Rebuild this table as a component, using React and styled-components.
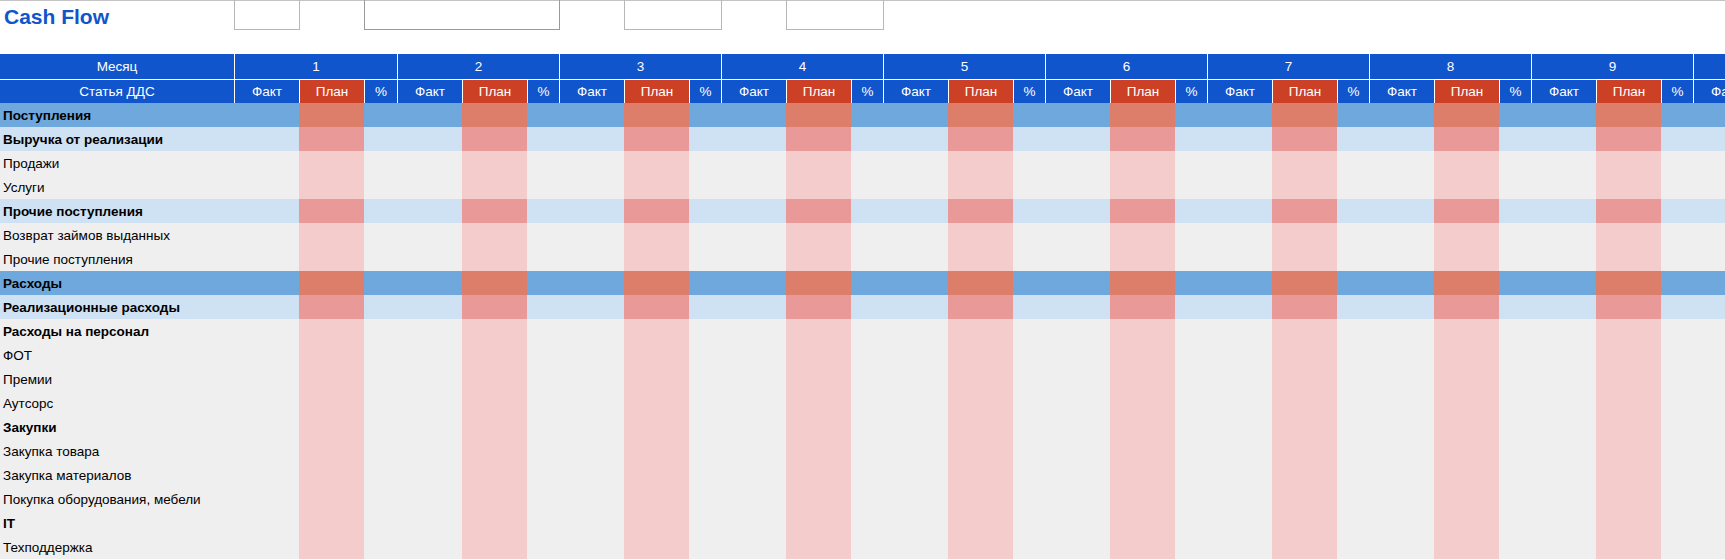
import React from 'react';
import styled, { createGlobalStyle } from 'styled-components';

const COLUMNS = '234px 65px 65px 33px repeat(9, 65px 65px 32px)';
const MONTHS = [1, 2, 3, 4, 5, 6, 7, 8, 9, 10];

const ROWS = [
  { name: 'Поступления', level: 1 },
  { name: 'Выручка от реализации', level: 2 },
  { name: 'Продажи' },
  { name: 'Услуги' },
  { name: 'Прочие поступления', level: 2 },
  { name: 'Возврат займов выданных' },
  { name: 'Прочие поступления' },
  { name: 'Расходы', level: 1 },
  { name: 'Реализационные расходы', level: 2 },
  { name: 'Расходы на персонал', bold: true },
  { name: 'ФОТ' },
  { name: 'Премии' },
  { name: 'Аутсорс' },
  { name: 'Закупки', bold: true },
  { name: 'Закупка товара' },
  { name: 'Закупка материалов' },
  { name: 'Покупка оборудования, мебели' },
  { name: 'IT', bold: true },
  { name: 'Техподдержка' },
];

const ROW_BG = { 0: '#efefef', 1: '#6fa8dc', 2: '#cfe2f3' };
const PLAN_BG = { 0: '#f4cccc', 1: '#dd7e6b', 2: '#ea9999' };

const GlobalStyle = createGlobalStyle`
  body {
    margin: 0;
    background: #fff;
    overflow: hidden;
    font-family: "Liberation Sans", Arial, sans-serif;
  }
`;

const Sheet = styled.div`
  width: 1725px;
  height: 560px;
  overflow: hidden;
`;

const TopRow = styled.div`
  display: grid;
  grid-template-columns: ${COLUMNS};
  height: 30px;
  border-top: 1px solid #c4c4c4;
  box-sizing: border-box;
`;

const Title = styled.div`
  grid-column: 1;
  padding: 2px 0 0 4px;
  font-size: 21px;
  line-height: 27px;
  font-weight: bold;
  color: #1155cc;
  white-space: nowrap;
`;

const InputBox = styled.div`
  grid-column: ${(p) => p.$from} / ${(p) => p.$to};
  margin-top: -1px;
  margin-right: -1px;
  border: 1px solid ${(p) => (p.$dark ? '#9a9a9a' : '#b7b7b7')};
  border-top: none;
  height: 30px;
  box-sizing: border-box;
`;

const Spacer = styled.div`
  height: 24px;
`;

const HeaderRow = styled.div`
  display: grid;
  grid-template-columns: ${COLUMNS};
  height: ${(p) => p.$height}px;
  background: #1155cc;
  border-bottom: ${(p) => (p.$divider ? '1px solid #fff' : 'none')};
`;

const HeadCell = styled.div`
  grid-column: ${(p) => (p.$span ? `span ${p.$span}` : 'auto')};
  border-left: ${(p) => (p.$first ? 'none' : '1px solid #fff')};
  background: ${(p) => (p.$plan ? '#cc4125' : 'transparent')};
  color: #fff;
  font-size: 13.5px;
  padding-top: 1px;
  line-height: ${(p) => p.$line - 1}px;
  text-align: center;
  white-space: nowrap;
  overflow: hidden;
`;

const DataRow = styled.div`
  display: grid;
  grid-template-columns: ${COLUMNS};
  height: 24px;
  background: ${(p) => ROW_BG[p.$level]};
`;

const Label = styled.div`
  padding: 1px 0 0 3px;
  font-size: 13.5px;
  line-height: 23px;
  font-weight: ${(p) => (p.$bold ? 'bold' : 'normal')};
  color: #000;
  white-space: nowrap;
  overflow: hidden;
`;

const Cell = styled.div`
  background: ${(p) => (p.$plan ? PLAN_BG[p.$level] : 'transparent')};
`;

const App = () => (
  <Sheet>
    <GlobalStyle />
    <TopRow>
      <Title>Cash Flow</Title>
      <InputBox $from={2} $to={3} />
      <InputBox $from={4} $to={8} $dark />
      <InputBox $from={9} $to={11} />
      <InputBox $from={12} $to={14} />
    </TopRow>
    <Spacer />
    <HeaderRow $height={25} $divider>
      <HeadCell $first $line={24}>
        Месяц
      </HeadCell>
      {MONTHS.map((m) => (
        <HeadCell key={m} $span={3} $line={24}>
          {m}
        </HeadCell>
      ))}
    </HeaderRow>
    <HeaderRow $height={23}>
      <HeadCell $first $line={23}>
        Статья ДДС
      </HeadCell>
      {MONTHS.map((m) => (
        <React.Fragment key={m}>
          <HeadCell $line={23}>Факт</HeadCell>
          <HeadCell $line={23} $plan>
            План
          </HeadCell>
          <HeadCell $line={23}>%</HeadCell>
        </React.Fragment>
      ))}
    </HeaderRow>
    {ROWS.map((row, i) => {
      const level = row.level || 0;
      return (
        <DataRow key={i} $level={level}>
          <Label $bold={row.bold || level > 0}>{row.name}</Label>
          {MONTHS.map((m) => (
            <React.Fragment key={m}>
              <Cell $level={level} />
              <Cell $level={level} $plan />
              <Cell $level={level} />
            </React.Fragment>
          ))}
        </DataRow>
      );
    })}
  </Sheet>
);

export default App;
